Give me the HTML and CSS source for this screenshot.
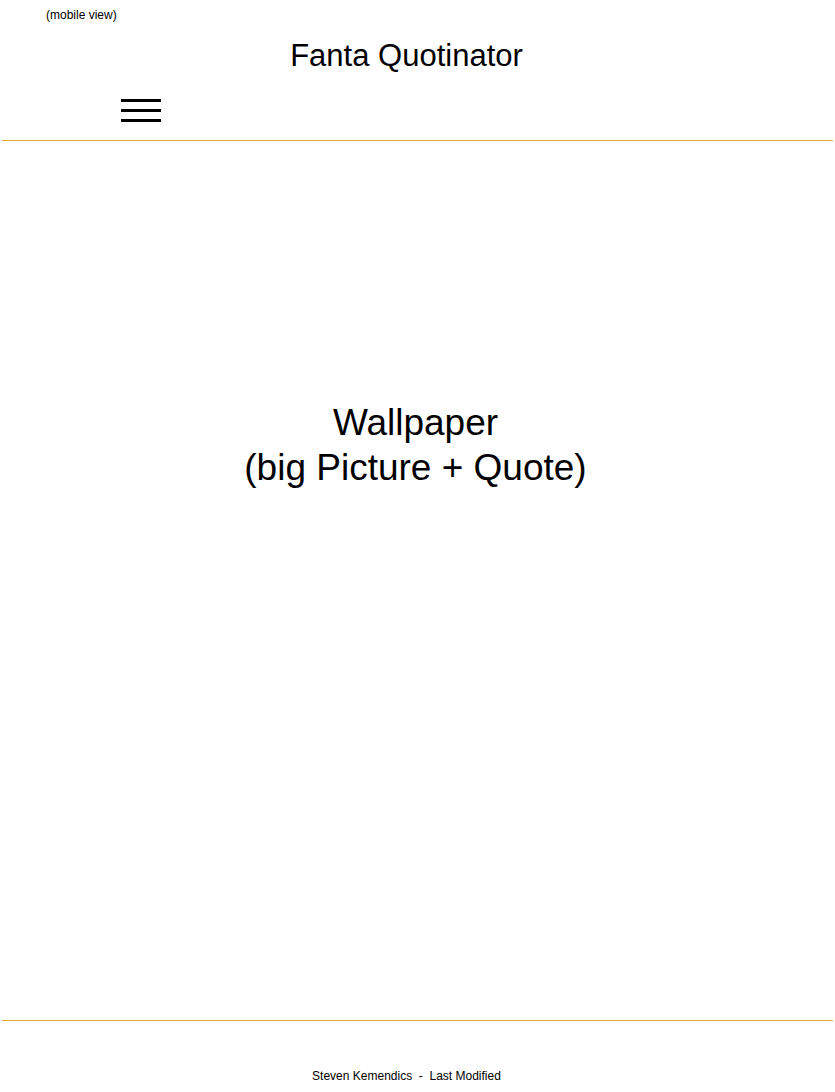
FILE: index.html
```html
<!DOCTYPE html>
<html lang="en">
<head>
<meta charset="utf-8">
<title>Fanta Quotinator</title>
<link rel="stylesheet" href="styles.css">
</head>
<body>
<header class="header">
  <div class="view-label">(mobile view)</div>
  <h1 class="title">Fanta Quotinator</h1>
  <div class="nav-row">
    <button class="menu-btn" aria-label="Menu">
      <span class="bar"></span>
      <span class="bar"></span>
      <span class="bar"></span>
    </button>
  </div>
</header>
<div class="rule"></div>
<main class="wallpaper">
  <p class="wallpaper-text">Wallpaper<br>(big Picture + Quote)</p>
</main>
<div class="rule"></div>
<footer class="footer">Steven Kemendics &nbsp;-&nbsp; Last Modified</footer>
</body>
</html>
```

FILE: styles.css
```css
html, body {
  margin: 0;
  padding: 0;
  background: #ffffff;
  color: #000000;
  font-family: "Liberation Sans", Arial, sans-serif;
}

.header {
  display: flex;
  flex-direction: column;
}

.view-label {
  font-size: 12px;
  line-height: 14px;
  padding: 8px 0 0 46px;
}

.title {
  margin: 16px 0 0 0;
  font-size: 31px;
  font-weight: normal;
  line-height: 36px;
  text-align: center;
  padding-right: 22px;
}

.nav-row {
  display: flex;
  padding: 25px 0 0 121px;
  height: 41px;
}

.menu-btn {
  display: flex;
  flex-direction: column;
  gap: 7px;
  width: 40px;
  padding: 0;
  border: 0;
  background: none;
  height: 23px;
}

.bar {
  display: block;
  width: 40px;
  height: 3px;
  background: #000000;
}

.rule {
  margin: 0 2px;
  height: 1px;
  background: #d9b034;
}

.wallpaper {
  height: 620px;
  padding-top: 259px;
  box-sizing: content-box;
}

.wallpaper-text {
  margin: 0;
  font-size: 37px;
  line-height: 45px;
  text-align: center;
  padding-right: 4px;
}

.footer {
  padding-top: 48px;
  font-size: 12px;
  line-height: 14px;
  text-align: center;
  padding-right: 22px;
}
```
